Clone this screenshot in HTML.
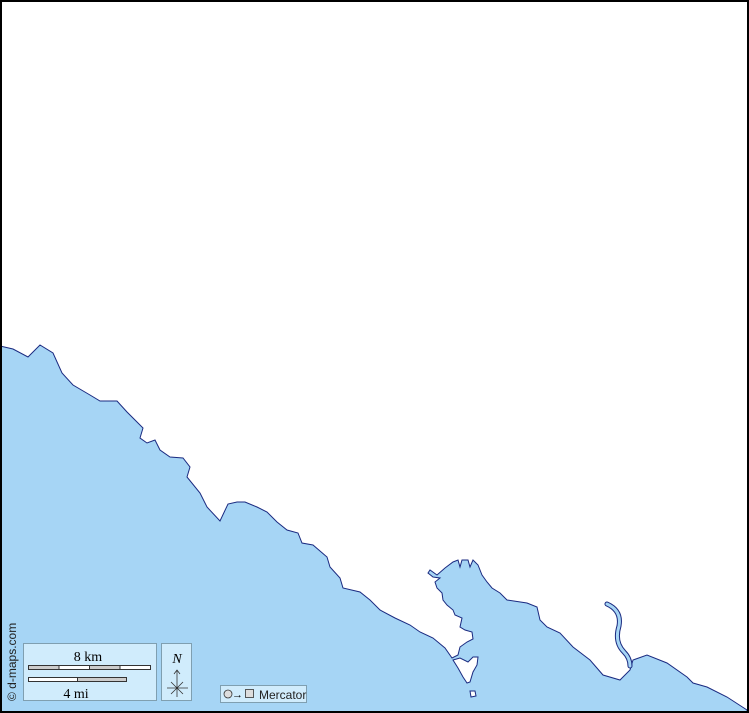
<!DOCTYPE html>
<html><head><style>
html,body{margin:0;padding:0;background:#fff}
svg{display:block}
</style></head><body>
<svg width="749" height="713" viewBox="0 0 749 713" xmlns="http://www.w3.org/2000/svg">
<rect x="0" y="0" width="749" height="713" fill="#fff"/>
<path d="M0,346 L13,349 L28,357 L40,345 L53,353 L62,373 L73,385 L90,395 L100,401 L117,401 L127,412 L135,420 L143,428 L140,438 L147,443 L155,440 L160,450 L170,457 L183,458 L190,467 L187,477 L200,493 L207,507 L220,521 L228,504 L237,502 L245,502 L257,507 L267,512 L277,522 L287,530 L298,533 L302,543 L313,545 L327,557 L330,567 L340,578 L343,588 L360,592 L370,600 L380,610 L395,618 L410,625 L420,632 L433,638 L445,648 L452,658 L458,655 L460,647 L467,642 L473,639 L472,632 L465,630 L460,627 L462,618 L455,615 L453,610 L447,605 L443,600 L442,593 L437,588 L435,582 L440,578 L433,577 L428,573 L430,570 L437,575 L445,568 L453,562 L458,560 L460,567 L462,560 L468,560 L470,567 L473,560 L478,565 L482,575 L487,582 L492,588 L500,593 L507,600 L527,603 L537,607 L540,620 L547,627 L560,633 L573,647 L590,660 L603,675 L620,680 L630,670 L633,660 L647,655 L667,663 L687,677 L693,683 L707,687 L727,697 L747,710 L747,713 L0,713 Z" fill="#a6d5f5" stroke="#1a2a80" stroke-width="1"/>
<path d="M453,660 L460,658 L468,662 L473,657 L478,657 L477,665 L473,672 L470,682 L467,683 L463,677 L458,668 Z" fill="#fff" stroke="#1a2a80" stroke-width="1"/>
<path d="M470,691 L475,691 L476,696 L471,697 Z" fill="#fff" stroke="#1a2a80" stroke-width="1"/>
<path d="M607,604 C616,608 621,615 619,626 C616,636 617,645 624,652 C628,656 630,660 630,666" fill="none" stroke="#1a2a80" stroke-width="5" stroke-linecap="round"/>
<path d="M607,604 C616,608 621,615 619,626 C616,636 617,645 624,652 C628,656 630,660 630,666" fill="none" stroke="#a6d5f5" stroke-width="3" stroke-linecap="round"/>
<rect x="1" y="1" width="747" height="711" fill="none" stroke="#000" stroke-width="2"/>
<g font-family="Liberation Serif, serif" fill="#000">
<rect x="23.5" y="643.5" width="133" height="57" fill="#d0ecfc" stroke="#7f9fb0"/>
<text x="88" y="661" font-size="14" text-anchor="middle">8 km</text>
<rect x="28.5" y="665.5" width="122" height="4" fill="#fff" stroke="#333" stroke-width="1"/>
<rect x="28.5" y="665.5" width="30.5" height="4" fill="#ccc" stroke="#333"/>
<rect x="89.5" y="665.5" width="30.5" height="4" fill="#ccc" stroke="#333"/>
<rect x="28.5" y="677.5" width="98" height="4" fill="#ccc" stroke="#333"/>
<rect x="28.5" y="677.5" width="49" height="4" fill="#fff" stroke="#333"/>
<text x="76" y="698" font-size="14" text-anchor="middle">4 mi</text>
<rect x="161.5" y="643.5" width="30" height="57" fill="#d0ecfc" stroke="#7f9fb0"/>
<text x="177" y="663" font-size="14" font-style="italic" text-anchor="middle">N</text>
<path d="M177,670 L177,697 M174,674 L177,670 L180,674 M167,688 L188,688 M171,682 L183,694 M183,682 L171,694" stroke="#333" stroke-width="0.8" fill="none"/>
</g>
<rect x="220.5" y="685.5" width="86" height="17" fill="#d0ecfc" stroke="#7f9fb0"/>
<circle cx="228" cy="694" r="4" fill="#ddd" stroke="#333" stroke-width="0.8"/>
<text x="232" y="698" font-family="Liberation Sans, sans-serif" font-size="11">→</text>
<rect x="245.5" y="689.5" width="8" height="8" fill="#ddd" stroke="#333" stroke-width="0.8"/>
<text x="259" y="699" font-family="Liberation Sans, sans-serif" font-size="12" fill="#222">Mercator</text>
<text transform="translate(16,701) rotate(-90)" font-family="Liberation Sans, sans-serif" font-size="12" fill="#222">© d-maps.com</text>
</svg>
</body></html>
